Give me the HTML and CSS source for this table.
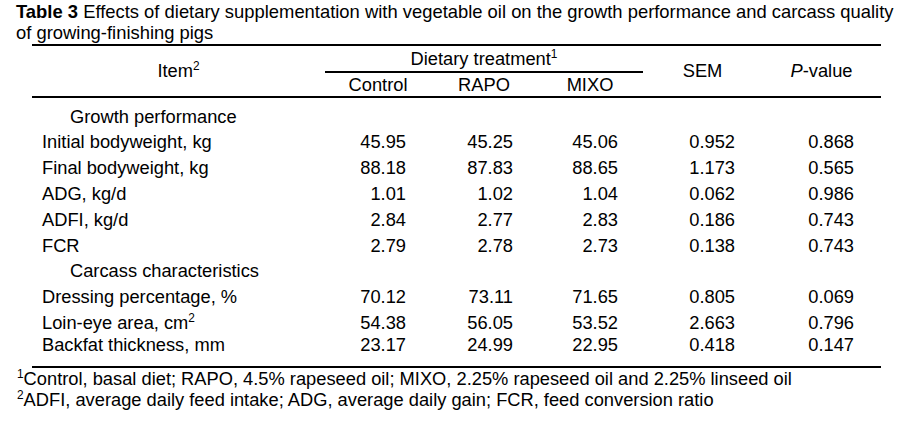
FILE: index.html
```html
<!DOCTYPE html>
<html lang="en">
<head>
<meta charset="utf-8">
<title>Table 3</title>
<link rel="stylesheet" href="styles.css">
</head>
<body>
<div class="page">
  <p class="title"><b>Table 3</b> Effects of dietary supplementation with vegetable oil on the growth performance and carcass quality<br>of growing-finishing pigs</p>
  <table class="data">
    <colgroup>
      <col class="c-item"><col class="c-num"><col class="c-num"><col class="c-num"><col class="c-stat"><col class="c-stat">
    </colgroup>
    <thead>
      <tr class="h1">
        <th rowspan="2" class="span">Item<sup>2</sup></th>
        <th colspan="3" class="group">Dietary treatment<sup>1</sup></th>
        <th rowspan="2" class="span">SEM</th>
        <th rowspan="2" class="span"><i>P</i>-value</th>
      </tr>
      <tr class="h2">
        <th>Control</th><th>RAPO</th><th>MIXO</th>
      </tr>
    </thead>
    <tbody>
      <tr class="sec first"><td colspan="6">Growth performance</td></tr>
      <tr><td>Initial bodyweight, kg</td><td>45.95</td><td>45.25</td><td>45.06</td><td>0.952</td><td>0.868</td></tr>
      <tr><td>Final bodyweight, kg</td><td>88.18</td><td>87.83</td><td>88.65</td><td>1.173</td><td>0.565</td></tr>
      <tr><td>ADG, kg/d</td><td>1.01</td><td>1.02</td><td>1.04</td><td>0.062</td><td>0.986</td></tr>
      <tr><td>ADFI, kg/d</td><td>2.84</td><td>2.77</td><td>2.83</td><td>0.186</td><td>0.743</td></tr>
      <tr><td>FCR</td><td>2.79</td><td>2.78</td><td>2.73</td><td>0.138</td><td>0.743</td></tr>
      <tr class="sec"><td colspan="6">Carcass characteristics</td></tr>
      <tr><td>Dressing percentage, %</td><td>70.12</td><td>73.11</td><td>71.65</td><td>0.805</td><td>0.069</td></tr>
      <tr><td>Loin-eye area, cm<sup>2</sup></td><td>54.38</td><td>56.05</td><td>53.52</td><td>2.663</td><td>0.796</td></tr>
      <tr class="last"><td>Backfat thickness, mm</td><td>23.17</td><td>24.99</td><td>22.95</td><td>0.418</td><td>0.147</td></tr>
    </tbody>
  </table>
  <div class="notes">
    <p><sup>1</sup>Control, basal diet; RAPO, 4.5% rapeseed oil; MIXO, 2.25% rapeseed oil and 2.25% linseed oil</p>
    <p><sup>2</sup>ADFI, average daily feed intake; ADG, average daily gain; FCR, feed conversion ratio</p>
  </div>
</div>
</body>
</html>
```
FILE: styles.css
```css
html, body {
  margin: 0;
  padding: 0;
  background: #ffffff;
}

body {
  font-family: "Liberation Sans", Arial, sans-serif;
  font-size: 18.3px;
  color: #000000;
}

.page {
  width: 903px;
}

.title {
  margin: 0;
  padding: 1px 0 0 16px;
  font-size: 18.4px;
  line-height: 21px;
  white-space: nowrap;
}

.data {
  margin: 1px 0 0 32px;
  width: 849px;
  table-layout: fixed;
  border-collapse: separate;
  border-spacing: 0;
}

.c-item { width: 293px; }
.c-num { width: 106px; }
.c-stat { width: 119px; }

th {
  font-weight: normal;
  padding: 0;
  text-align: center;
  white-space: nowrap;
}

.h1 th {
  border-top: 2px solid #000;
}

.group {
  border-bottom: 2px solid #000;
  line-height: 24px;
  padding-top: 1px;
}

.span,
.h2 th {
  border-bottom: 2px solid #000;
}

.h2 th {
  line-height: 22px;
  padding-top: 1px;
}

td {
  padding: 0 25px 0 0;
  line-height: 25.8px;
  text-align: right;
  white-space: nowrap;
}

td:first-child {
  text-align: left;
  padding: 0 0 0 10px;
}

td:nth-child(3) { padding-right: 24px; }
td:nth-child(5),
td:nth-child(6) { padding-right: 27px; }

.sec td:first-child {
  padding-left: 38px;
}

.first td {
  padding-top: 5.7px;
}

.last td {
  line-height: 18.2px;
  padding-bottom: 12.3px;
  border-bottom: 2px solid #000;
}

sup {
  font-size: 0.65em;
  line-height: 0;
  vertical-align: 0.55em;
}

.notes {
  padding-left: 17px;
  line-height: 21px;
}

.notes p {
  margin: 0;
}
```
